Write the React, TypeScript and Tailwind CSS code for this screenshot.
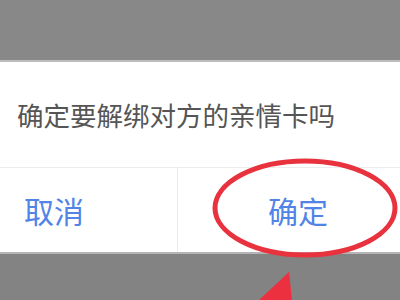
export default function App() {
  return (
    <div
      className="relative w-[400px] h-[300px] overflow-hidden bg-[#838383]"
      style={{ fontFamily: '"Noto Sans CJK SC", "Noto Sans", sans-serif' }}
    >
      <div className="h-[62px] bg-[#888888] border-b-2 border-[#bdbdbd]" />
      <div className="bg-white">
        <div className="h-[105px] pl-[17px] pt-[35px] text-[26.5px] leading-[36px] text-[#555555]">
          确定要解绑对方的亲情卡吗
        </div>
        <div className="flex h-[85px] -ml-[69px] w-[500px] border-t border-[#ececec]">
          <div className="w-[247px] flex items-center justify-center border-r border-[#ececec] text-[30px] text-[#5283e6]">
            取消
          </div>
          <div className="w-[240px] flex items-center justify-center text-[30px] text-[#5283e6]">
            确定
          </div>
        </div>
      </div>
      <div className="h-[2px] bg-[#b5b5b5]" />
      <svg className="absolute left-0 top-0" width="400" height="300" viewBox="0 0 400 300">
        <ellipse cx="305" cy="208" rx="90" ry="47" fill="none" stroke="#e8333f" strokeWidth="5" />
        <polygon points="289,272 259,300 292,300" fill="#ec3040" />
      </svg>
    </div>
  );
}
